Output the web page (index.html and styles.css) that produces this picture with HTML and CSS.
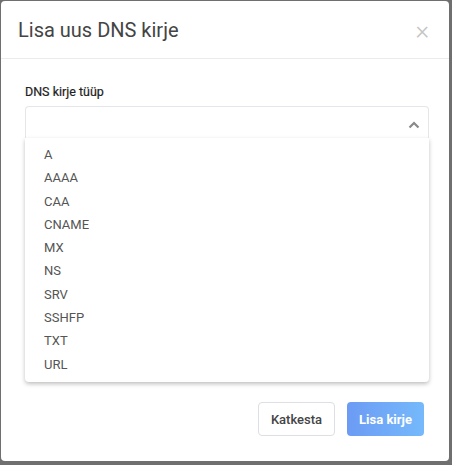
FILE: index.html
```html
<!DOCTYPE html>
<html lang="et">
<head>
  <meta charset="UTF-8">
  <title>Lisa uus DNS kirje</title>
  <link rel="stylesheet" href="styles.css">
</head>
<body>
  <div class="modal">
    <div class="modal-header">
      <h2>Lisa uus DNS kirje</h2>
      <span class="close">&times;</span>
    </div>

    <div class="modal-body">
      <label class="field-label">DNS kirje tüüp</label>
      <div class="select">
        <div class="select-box">
          <svg class="chevron" width="12" height="8" viewBox="0 0 12 8">
            <path d="M1.5 6.5 L6 2 L10.5 6.5" fill="none" stroke="#8a8a8a" stroke-width="2.2"/>
          </svg>
        </div>
        <ul class="options">
          <li>A</li>
          <li>AAAA</li>
          <li>CAA</li>
          <li>CNAME</li>
          <li>MX</li>
          <li>NS</li>
          <li>SRV</li>
          <li>SSHFP</li>
          <li>TXT</li>
          <li>URL</li>
        </ul>
      </div>
    </div>

    <div class="modal-footer">
      <button class="btn btn-light">Katkesta</button>
      <button class="btn btn-primary">Lisa kirje</button>
    </div>
  </div>
</body>
</html>
```
FILE: styles.css
```css
body {
  margin: 0;
  padding: 1px 3px 3px 1px;
  background-color: #6f6f6f;
  font-family: Roboto, "Liberation Sans", sans-serif;
}

.modal {
  width: 448px;
  height: 460px;
  background: white;
  border-radius: 4px;
  display: flex;
  flex-direction: column;
}

.modal-header {
  height: 57px;
  border-bottom: 1px solid #e9ecef;
  display: flex;
  align-items: center;
  justify-content: space-between;
  padding: 0 20px 0 17px;
}

.modal-header h2 {
  margin: 0;
  font-size: 20px;
  font-weight: 400;
  color: #444;
}

.close {
  font-size: 26px;
  font-weight: 300;
  color: #c4c4c4;
  line-height: 1;
}

.modal-body {
  flex: 1;
  padding: 25px 20px 0 24px;
}

.field-label {
  display: block;
  font-size: 12.5px;
  font-weight: 400;
  color: #222;
  margin-bottom: 7px;
  -webkit-text-stroke: 0.2px #222;
}

.select {
  position: relative;
}

.select-box {
  height: 31px;
  border: 1px solid #e3e6ea;
  border-bottom-color: #f1f1f1;
  border-radius: 4px 4px 0 0;
  display: flex;
  align-items: center;
  justify-content: flex-end;
  padding-right: 8px;
}

.chevron {
  margin-top: 4px;
}

.options {
  position: absolute;
  top: 32px;
  left: 0;
  right: 0;
  margin: 0;
  padding: 5px 0 6px 0;
  list-style: none;
  background: white;
  border-radius: 0 0 4px 4px;
  box-shadow: 0 2px 4px rgba(0,0,0,0.25);
}

.options li {
  font-size: 13px;
  color: #555;
  padding: 0 0 0 19px;
  height: 23.3px;
  line-height: 23.3px;
}

.modal-footer {
  display: flex;
  justify-content: flex-end;
  gap: 12px;
  padding: 0 25px 25px 0;
}

.btn {
  height: 34px;
  width: 77px;
  border-radius: 4px;
  font-family: Roboto, "Liberation Sans", sans-serif;
  font-size: 13px;
  font-weight: 500;
  cursor: pointer;
}

.btn-light {
  background: white;
  border: 1px solid #dcdfe3;
  color: #444;
}

.btn-primary {
  border: none;
  color: white;
  font-weight: 700;
  background: linear-gradient(to right, #6c9bf4, #75b9fb);
}
```
